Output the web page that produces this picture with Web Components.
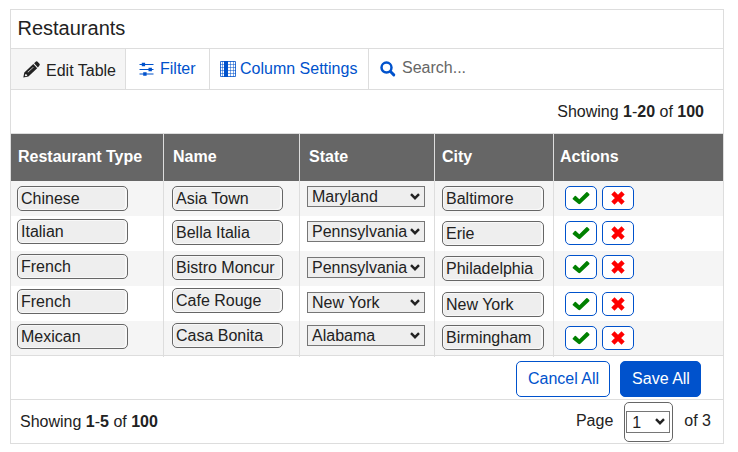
<!DOCTYPE html>
<html lang="en">
<head>
<meta charset="utf-8">
<title>Restaurants</title>
<style>
body{margin:0;padding:9px 0 0 10px;background:#fff;color:#222;font:16px/20px "Liberation Sans",Arial,sans-serif}
</style>
</head>
<body>
<restaurant-grid></restaurant-grid>
<script>
const define = (name, html, setup) => customElements.define(name, class extends HTMLElement {
  constructor() {
    super();
    const t = document.createElement('template');
    t.innerHTML = html;
    this.attachShadow({mode: 'open'}).append(t.content.cloneNode(true));
  }
  connectedCallback() { if (setup) setup(this, this.shadowRoot); }
});

const icons = {
  pencil: ['0 0 17 17', '<path fill="#222" fill-rule="evenodd" d="M.3 16.6 1.3 11.4 10.3 3 14.2 7.2 5.4 15.6ZM2.3 12.9 1.8 14.6l.7.7 1.7-.5-.2-1.2-1.1-.1ZM4.6 11.1l.4.4 5.6-5.2-.4-.4ZM11.1 2.3 13 .6Q13.8 0 14.6.7L16.5 2.7Q17.2 3.6 16.4 4.4L14.9 6.4Z"/>'],
  sliders: ['0 0 15 14', '<path stroke="#0052cc" stroke-width="1.1" d="M.5 2.5h14M.5 7.5h14M.5 12h14"/><path fill="#0052cc" d="M2.8.8h3.3v3.4H2.8ZM9.5 5.8h3.4v3.4H9.5ZM4.2 10.3h3.4v3.4H4.2Z"/>'],
  columns: ['0 0 16 16', '<path fill="#fff" stroke="#0052cc" stroke-opacity=".8" d="M.5.5h15v15H.5Z"/><path stroke="#0052cc" stroke-opacity=".5" d="M0 3.5h16M0 6.5h16M0 9.5h16M0 12.5h16M2.5 0v16M10.5 0v16M13.5 0v16"/><path fill="#0052cc" d="M4 0h4v16H4Z"/>'],
  search: ['0 0 16 16', '<circle cx="6.5" cy="6.6" r="5" fill="none" stroke="#0052cc" stroke-width="2.5"/><path stroke="#0052cc" stroke-width="2.9" stroke-linecap="round" d="m10.7 10.8 3.1 3.1"/>'],
  check: ['0 0 18 14', '<path fill="#008000" d="M.8 7.2 2.8 5.1Q3.3 4.6 3.9 5.1L7.3 8.3 14.3 1.3Q14.9.8 15.5 1.3L17.3 3.1Q17.7 3.6 17.3 4.2L8.3 12.8Q7.3 13.5 6.3 12.8L.8 8.3Q.3 7.8.8 7.2Z"/>'],
  cross: ['0 0 14 14', '<path stroke="#f00" stroke-width="4.5" d="m1.9 1.9 10.2 10.2M12.1 1.9 1.9 12.1"/>'],
  caret: ['0 0 10 7', '<path fill="none" stroke="#222" stroke-width="2.4" d="m1 1.2 4 4 4-4"/>']
};
define('ui-icon', '<style>:host{display:block;flex:none}div{height:100%}svg{display:block;width:100%;height:100%}</style><div></div>', (el, r) => {
  const [box, art] = icons[el.getAttribute('name')];
  r.querySelector('div').innerHTML = `<svg viewBox="${box}">${art}</svg>`;
});

define('tool-tab', `<style>
:host{display:flex;align-items:flex-start;box-sizing:border-box;height:40px;color:#0052cc;border-right:1px solid #ddd;white-space:nowrap}
:host([active]){background:#f5f5f5;color:#222}
:host([plain]){border:0;color:#666}
</style><slot></slot>`);

define('text-field', `<style>
:host{display:block;box-sizing:border-box;height:25px;border:1px solid #666;border-radius:5px;background:#eee;box-shadow:inset -2px -1px #f8f8f8,inset 1px 1px #f8f8f8;padding:2px 3px;line-height:20px;white-space:nowrap;overflow:hidden}
</style><slot></slot>`);

define('select-field', `<style>
:host{display:flex;box-sizing:border-box;height:21px;border:1px solid #767676;background:#eee;padding:0 4px;line-height:19px;justify-content:space-between;white-space:nowrap}
ui-icon{width:10px;height:7px;margin-top:6px}
</style><slot></slot><ui-icon name="caret"></ui-icon>`);

define('icon-button', `<style>
:host{display:flex;flex:none;box-sizing:border-box;width:32px;height:24px;border:1px solid #0052cc;border-radius:5px;background:#fff;align-items:center;justify-content:center}
</style><slot></slot>`);

define('action-button', `<style>
:host{display:block;box-sizing:border-box;height:36px;border:1px solid #0052cc;border-radius:5px;background:#fff;color:#0052cc;line-height:34px;text-align:center;padding-left:1px}
:host([primary]){background:#0052cc;color:#fff}
</style><slot></slot>`);

define('grid-header', `<style>
:host{display:grid;grid-template-columns:152px 136px 135px 119px 170px;height:47px;background:#666;color:#fff;font-weight:bold}
span{border-left:1px solid #ddd;padding:13px 0 0 9px}
span:first-of-type{border:0;padding-left:7px}
span:nth-of-type(4){padding-left:7px}
span:nth-of-type(5){padding-left:6px}
</style><span>Restaurant Type</span><span>Name</span><span>State</span><span>City</span><span>Actions</span>`);

define('grid-row', `<style>
:host{display:grid;grid-template-columns:152px 136px 135px 119px 170px;height:35px}
:host([shade]){background:#f5f5f5}
:host([last]){height:34px}
div{border-left:1px solid #ddd;box-sizing:border-box;padding-left:8px}
:host([last]) div{height:36px}
div:first-of-type{border:0;padding-left:6px}
div:nth-of-type(3),div:nth-of-type(4){padding-left:7px}
div:nth-of-type(5){display:flex;gap:5px;padding-left:11px}
text-field{width:111px}.city{width:102px}select-field{width:118px}
.ok{width:18px;height:14px}.no{width:14px;height:14px}
</style>
<div><text-field class="type"></text-field></div><div><text-field class="name"></text-field></div>
<div><select-field></select-field></div><div><text-field class="city"></text-field></div>
<div><icon-button><ui-icon class="ok" name="check"></ui-icon></icon-button><icon-button><ui-icon class="no" name="cross"></ui-icon></icon-button></div>`, (el, r) => {
  const v = el.getAttribute('values').split('|');
  const tops = el.getAttribute('insets').split(' ');
  ['.type', '.name', 'select-field', '.city'].forEach((s, i) => { r.querySelector(s).textContent = v[i]; });
  r.querySelectorAll('div').forEach((d, i) => { d.style.paddingTop = tops[i] + 'px'; });
});

define('restaurant-grid', `<style>
:host{display:block;box-sizing:border-box;width:714px;height:435px;border:1px solid #ddd}
h1{margin:0;height:38px;box-sizing:border-box;padding:6px 6px 0 6.5px;font:20px/24px "Liberation Sans",Arial,sans-serif}
nav{display:flex;height:40px;border:solid #ddd;border-width:1px 0}
.top{height:44px;box-sizing:border-box;padding:12px 19px 0 0;text-align:right;border-bottom:1px solid #ddd}
.rows{height:174px;border-bottom:1px solid #ddd}
.bulk{display:flex;justify-content:flex-end;gap:10px;height:44px;box-sizing:border-box;padding:5px 22px 0 0;border-bottom:1px solid #ddd}
footer{display:flex;height:43px;box-sizing:border-box;padding:0 12px 0 9px;align-items:flex-start}
.count{padding-top:12px;margin-right:auto}
.page{padding-top:11px}
.pager{box-sizing:border-box;width:49px;height:40px;border:1px solid #666;border-radius:5px;margin:2px 11px 0 11px;padding:8px 2px 0 1px}
.pager select-field{height:22px;background:#fff;line-height:21px;padding:0 4px 0 5px}
.p{width:17px;height:17px;margin:12px 5px 0 12px}
.s{width:15px;height:14px;margin:13px 6px 0 13px}
.c{width:16px;height:16px;margin:12px 4px 0 10px}
.f{width:16px;height:16px;margin:12px 6px 0 11px}
</style>
<h1>Restaurants</h1>
<nav>
<tool-tab active style="width:115px"><ui-icon class="p" name="pencil"></ui-icon><span style="padding-top:12px;margin-left:1px">Edit Table</span></tool-tab>
<tool-tab style="width:84px"><ui-icon class="s" name="sliders"></ui-icon><span style="padding-top:10px">Filter</span></tool-tab>
<tool-tab style="width:159px"><ui-icon class="c" name="columns"></ui-icon><span style="padding-top:10px">Column Settings</span></tool-tab>
<tool-tab plain><ui-icon class="f" name="search"></ui-icon><span style="padding-top:9px">Search...</span></tool-tab>
</nav>
<div class="top">Showing <b>1</b>-<b>20</b> of <b>100</b></div>
<grid-header></grid-header>
<div class="rows">
<grid-row shade values="Chinese|Asia Town|Maryland|Baltimore" insets="5 5 5 5 5"></grid-row>
<grid-row values="Italian|Bella Italia|Pennsylvania|Erie" insets="3 4 5 5 5"></grid-row>
<grid-row shade values="French|Bistro Moncur|Pennsylvania|Philadelphia" insets="3 4 6 5 4"></grid-row>
<grid-row values="French|Cafe Rouge|New York|New York" insets="3 2 6 6 6"></grid-row>
<grid-row shade last values="Mexican|Casa Bonita|Alabama|Birmingham" insets="3 2 4 4 5"></grid-row>
</div>
<div class="bulk"><action-button style="width:94px">Cancel All</action-button><action-button primary style="width:81px">Save All</action-button></div>
<footer><div class="count">Showing <b>1</b>-<b>5</b> of <b>100</b></div><div class="page">Page</div><div class="pager"><select-field>1</select-field></div><div class="page">of 3</div></footer>`);
</script>
</body>
</html>
